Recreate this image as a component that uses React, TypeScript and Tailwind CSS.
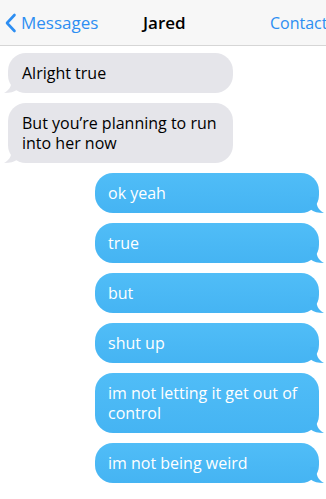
import React from "react";

type Msg = { text: string; fromMe: boolean };

const messages: Msg[] = [
  { text: "Alright true", fromMe: false },
  { text: "But you\u2019re planning to run into her now", fromMe: false },
  { text: "ok yeah", fromMe: true },
  { text: "true", fromMe: true },
  { text: "but", fromMe: true },
  { text: "shut up", fromMe: true },
  { text: "im not letting it get out of control", fromMe: true },
  { text: "im not being weird", fromMe: true },
];

function Tail({ fromMe }: { fromMe: boolean }) {
  if (fromMe) {
    return (
      <svg
        className="absolute -right-[5px] bottom-0"
        width="14"
        height="16"
        viewBox="0 0 14 16"
      >
        <path d="M0 0 L6 0 C6 8 8 13 14 16 C8 16 4 15 0 12 Z" fill="#46b5f4" />
      </svg>
    );
  }
  return (
    <svg
      className="absolute -left-[4px] bottom-0"
      width="14"
      height="16"
      viewBox="0 0 14 16"
    >
      <path d="M14 0 L8 0 C8 8 6 13 0 16 C6 16 10 15 14 12 Z" fill="#e5e5ea" />
    </svg>
  );
}

function Bubble({ msg }: { msg: Msg }) {
  return (
    <div className={msg.fromMe ? "flex justify-end pr-[7px]" : "flex justify-start pl-[8px]"}>
      <div
        className={
          msg.fromMe
            ? "relative w-[224px] rounded-[18px] bg-gradient-to-b from-[#50bdf7] to-[#45b4f3] px-[13px] py-[10px] text-white"
            : "relative w-[225px] rounded-[18px] bg-[#e5e5ea] px-[14px] py-[10px] text-black"
        }
      >
        <Tail fromMe={msg.fromMe} />
        <p className="relative text-[16px] leading-[20px]">{msg.text}</p>
      </div>
    </div>
  );
}

export default function App() {
  return (
    <div
      className="h-[499px] w-[326px] overflow-hidden bg-white"
      style={{ fontFamily: '"Open Sans", "Liberation Sans", sans-serif' }}
    >
      <header className="flex h-[46px] items-center overflow-hidden border-b border-[#d6d6d6] bg-[#f7f7f7] whitespace-nowrap">
        <div className="flex w-[140px] shrink-0 items-center pl-[4px] text-[#2d8ef2]">
          <svg width="13" height="20" viewBox="0 0 13 20" className="mr-[4px]">
            <path d="M10.5 2 L3 10 L10.5 18" fill="none" stroke="#2d8ef2" strokeWidth="2.6" strokeLinecap="round" strokeLinejoin="round" />
          </svg>
          <span className="text-[17px]">Messages</span>
        </div>
        <div className="w-[130px] shrink-0 text-[17px] font-semibold text-black">
          <span className="pl-[3px]">Jared</span>
        </div>
        <span className="shrink-0 text-[16px] text-[#2d8ef2]">Contact</span>
      </header>
      <div className="flex flex-col gap-[10px] pt-[7px]">
        {messages.map((m, i) => (
          <Bubble key={i} msg={m} />
        ))}
      </div>
    </div>
  );
}
